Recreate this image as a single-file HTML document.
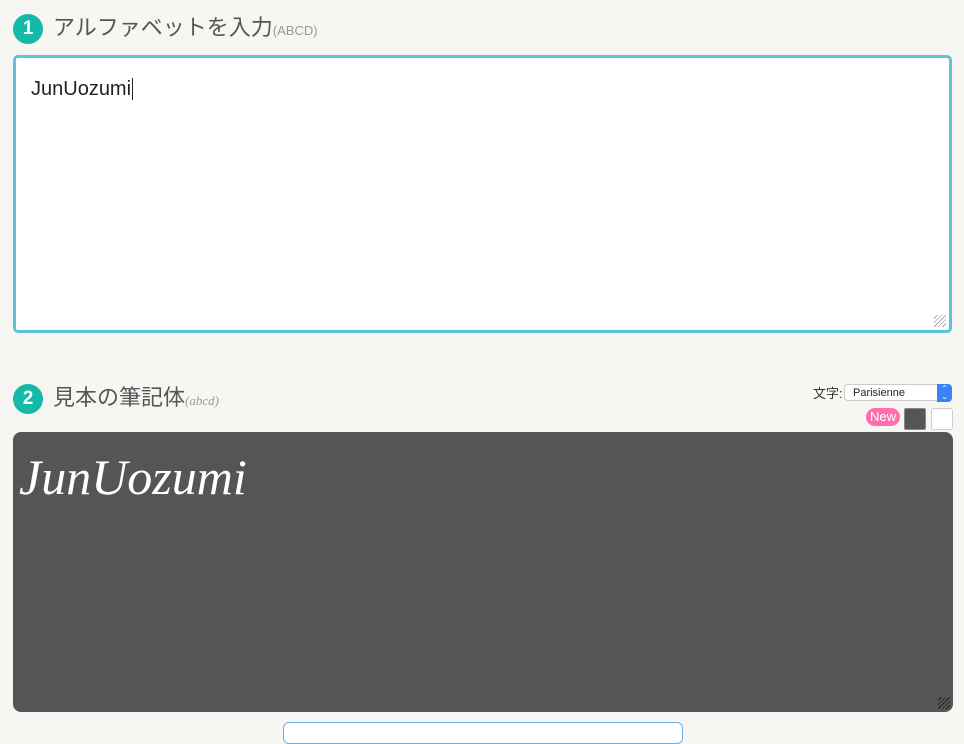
<!DOCTYPE html>
<html><head><meta charset="utf-8"><style>
html,body{margin:0;padding:0}
body{width:964px;height:725px;background:#f7f6f2;position:relative;overflow:hidden;font-family:"Liberation Sans","Noto Sans CJK JP",sans-serif;color:#555}
.c{position:absolute;width:30px;height:30px;border-radius:50%;background:#14b9a9;color:#fff;font-size:19px;font-weight:bold;line-height:30px;text-align:center}
.t{position:absolute;font-size:22px;color:#555;line-height:30px}
.t small{font-size:13px;color:#999}
.ta{position:absolute;left:13px;top:55px;width:933px;height:272px;border:3px solid #5bc4d9;border-radius:5px;background:#fff}
.ta span{position:absolute;left:15px;top:20px;font-size:20px;color:#222}
.dark{position:absolute;left:13px;top:432px;width:940px;height:280px;background:#555;border-radius:8px}
.grip{position:absolute;right:3px;bottom:3px;width:12px;height:12px}
</style></head><body>
<div class="c" style="left:13px;top:14px">1</div>
<div class="t" style="left:53px;top:13px">アルファベットを入力<small>(ABCD)</small></div>
<div class="ta"><span>JunUozumi<span style="position:static;border-left:1px solid #222;margin-left:1px"></span></span><div class="grip" style="background:repeating-linear-gradient(135deg,transparent 0 2px,#aaa 2px 3px)"></div></div>
<div class="c" style="left:13px;top:384px">2</div>
<div class="t" style="left:53px;top:383px">見本の筆記体<small style="font-family:'Liberation Serif',serif;font-style:italic">(abcd)</small></div>
<div style="position:absolute;left:813px;top:383px;font-size:13px;color:#333">文字:</div>
<div style="position:absolute;left:844px;top:384px;width:108px;height:17px;background:#fff;border:1px solid #ccc;border-radius:4px;font-size:11px;color:#222;line-height:17px;box-sizing:border-box;padding-left:8px">Parisienne<div style="position:absolute;right:-1px;top:-1px;width:15px;height:17px;background:#3b82f6;border-radius:0 4px 4px 0;color:#fff;font-size:8px;line-height:8px;text-align:center;padding-top:1px">⌃<br>⌄</div></div>
<div style="position:absolute;left:866px;top:408px;width:34px;height:18px;border-radius:9px;background:#ff6fae;color:#fff;font-size:13px;line-height:18px;text-align:center">New</div>
<div style="position:absolute;left:904px;top:408px;width:20px;height:20px;background:#555;border:1px solid #888;border-radius:2px"></div>
<div style="position:absolute;left:931px;top:408px;width:20px;height:20px;background:#fff;border:1px solid #ccc;border-radius:3px"></div>
<div class="dark"><div style="position:absolute;left:6px;top:16px;font-family:'Liberation Serif',serif;font-style:italic;font-size:50px;color:#fff">JunUozumi</div><div class="grip" style="background:repeating-linear-gradient(135deg,transparent 0 2px,#222 2px 3px)"></div></div>
<div style="position:absolute;left:283px;top:722px;width:398px;height:20px;border:1px solid #6ab0e6;border-radius:6px;background:#fff"></div>
</body></html>
